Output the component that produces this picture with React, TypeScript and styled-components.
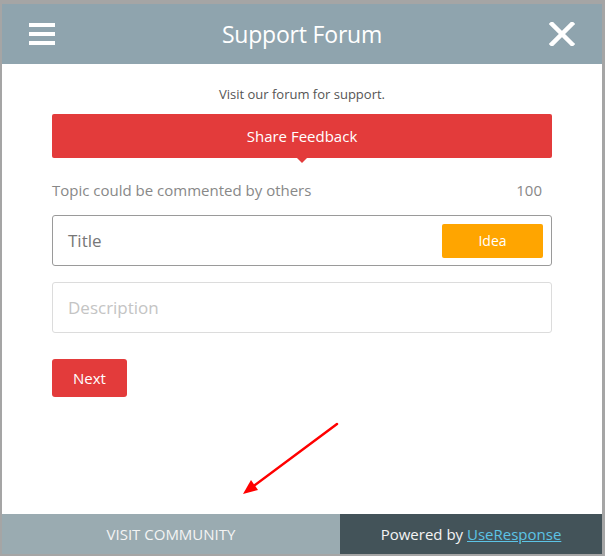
import React from 'react'
import styled, { createGlobalStyle } from 'styled-components'

const GlobalStyle = createGlobalStyle`
  html, body {
    margin: 0;
    padding: 0;
    background: #a5a5a5;
  }
  body {
    font-family: "Open Sans", "Noto Sans", sans-serif;
  }
`

const Page = styled.div`
  width: 605px;
  height: 556px;
  padding: 4px 3px 2px 2px;
  box-sizing: border-box;
`

const Dialog = styled.div`
  position: relative;
  width: 600px;
  height: 550px;
  display: flex;
  flex-direction: column;
  background: #fff;
`

const Header = styled.div`
  height: 60px;
  flex: none;
  background: #8fa4ae;
  display: flex;
  align-items: center;
  justify-content: space-between;
  padding: 0 27px 0 27px;
  box-sizing: border-box;
`

const Burger = styled.div`
  width: 26px;
  display: flex;
  flex-direction: column;
  gap: 5px;
  span {
    display: block;
    height: 4px;
    background: #fff;
  }
`

const Title = styled.h1`
  margin: 0;
  font-size: 23px;
  font-weight: 400;
  color: #fff;
  letter-spacing: -0.2px;
`

const Content = styled.div`
  flex: 1;
  padding: 20px 50px 0;
  display: flex;
  flex-direction: column;
`

const Intro = styled.div`
  text-align: center;
  font-size: 13px;
  color: #555;
  line-height: 20px;
  margin-bottom: 10px;
`

const Banner = styled.div`
  position: relative;
  height: 44px;
  background: #e33b3b;
  border-radius: 2px;
  color: #fff;
  font-size: 15px;
  display: flex;
  align-items: center;
  justify-content: center;
  &::after {
    content: '';
    position: absolute;
    left: 50%;
    bottom: -5px;
    margin-left: -5px;
    border-left: 5px solid transparent;
    border-right: 5px solid transparent;
    border-top: 5px solid #e33b3b;
  }
`

const HintRow = styled.div`
  display: flex;
  justify-content: space-between;
  font-size: 15px;
  color: #888;
  margin: 22px 10px 15px 0;
  line-height: 20px;
`

const Field = styled.div<{ $strong?: boolean }>`
  height: 51px;
  box-sizing: border-box;
  border: 1px solid ${p => (p.$strong ? '#9a9a9a' : '#dcdcdc')};
  border-radius: 3px;
  display: flex;
  align-items: center;
  justify-content: space-between;
  padding: 0 8px 0 15px;
  margin-bottom: 16px;
`

const Placeholder = styled.span<{ $light?: boolean }>`
  font-size: 17px;
  color: ${p => (p.$light ? '#c4c4c4' : '#777')};
`

const Tag = styled.button`
  width: 101px;
  height: 34px;
  border: none;
  border-radius: 2px;
  background: #ffa500;
  color: #fff;
  font-family: inherit;
  font-size: 14px;
`

const NextButton = styled.button`
  align-self: flex-start;
  margin-top: 10px;
  width: 75px;
  height: 38px;
  border: none;
  border-radius: 3px;
  background: #e33b3b;
  color: #fff;
  font-family: inherit;
  font-size: 15px;
`

const Footer = styled.div`
  height: 40px;
  flex: none;
  display: flex;
`

const FooterCell = styled.div<{ $dark?: boolean; $w: number }>`
  width: ${p => p.$w}px;
  background: ${p => (p.$dark ? '#435359' : '#9aabb1')};
  color: #f4f4f4;
  font-size: 15px;
  display: flex;
  align-items: center;
  justify-content: center;
  a {
    color: #5cc4e6;
    text-decoration: underline;
  }
`

const Arrow = styled.svg`
  position: absolute;
  left: 235px;
  top: 416px;
`

export default function App() {
  return (
    <Page>
      <GlobalStyle />
      <Dialog>
        <Header>
          <Burger>
            <span />
            <span />
            <span />
          </Burger>
          <Title>Support Forum</Title>
          <svg width="26" height="24" viewBox="0 0 26 24">
            <path d="M3 2 L23 22 M23 2 L3 22" stroke="#fff" strokeWidth="4.5" strokeLinecap="square" />
          </svg>
        </Header>
        <Content>
          <Intro>Visit our forum for support.</Intro>
          <Banner>Share Feedback</Banner>
          <HintRow>
            <span>Topic could be commented by others</span>
            <span>100</span>
          </HintRow>
          <Field $strong>
            <Placeholder>Title</Placeholder>
            <Tag>Idea</Tag>
          </Field>
          <Field>
            <Placeholder $light>Description</Placeholder>
          </Field>
          <NextButton>Next</NextButton>
        </Content>
        <Footer>
          <FooterCell $w={338}>VISIT COMMUNITY</FooterCell>
          <FooterCell $w={262} $dark>
            Powered by&nbsp;<a href="#">UseResponse</a>
          </FooterCell>
        </Footer>
        <Arrow width="110" height="82" viewBox="0 0 110 82">
          <line x1="100" y1="4" x2="14" y2="68" stroke="#ff0000" strokeWidth="2.5" strokeLinecap="round" />
          <polygon points="6,74 14,60 21,70" fill="#ff0000" />
        </Arrow>
      </Dialog>
    </Page>
  )
}
